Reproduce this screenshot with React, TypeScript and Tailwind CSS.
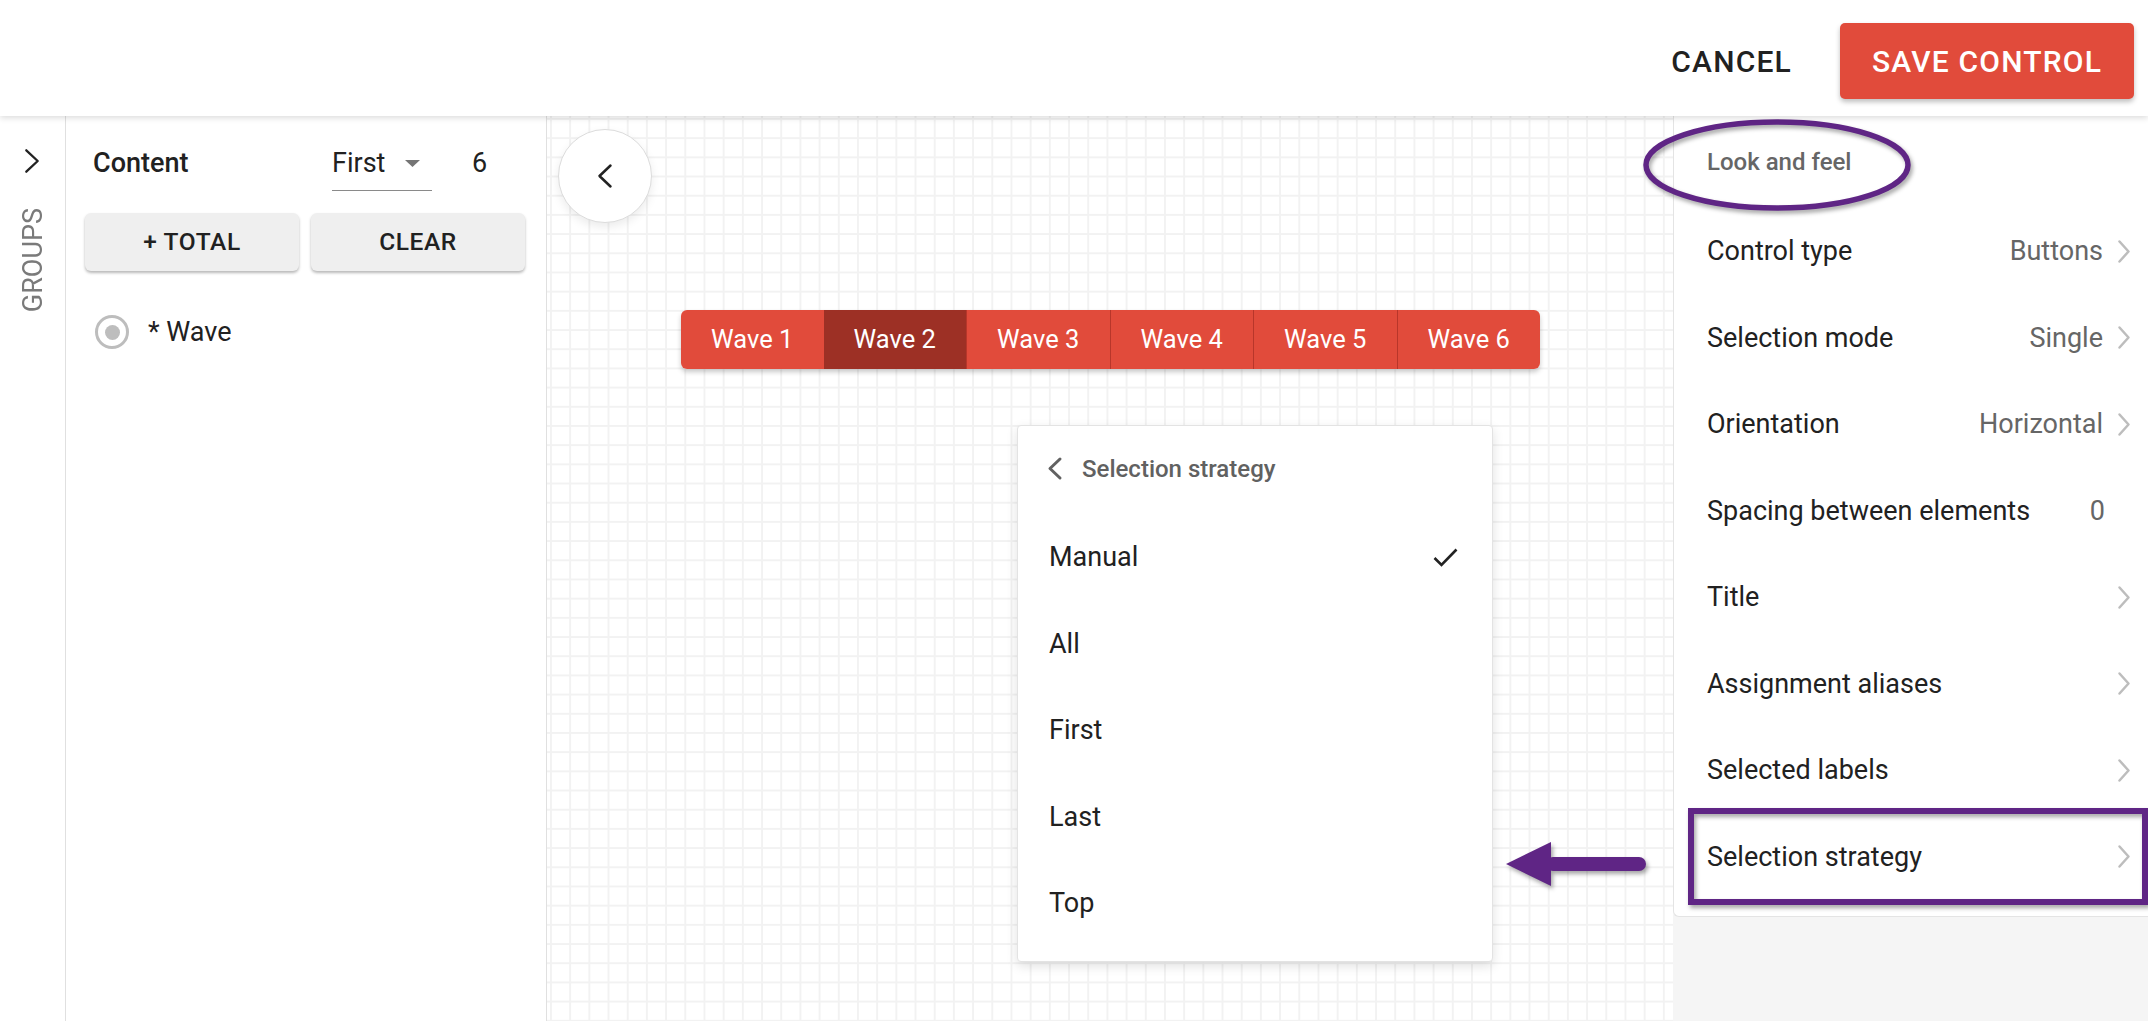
import React from "react";

const ChevronRight = ({ className = "", color = "#bdbdbd", w = 14, h = 25, sw = 2.5 }: { className?: string; color?: string; w?: number; h?: number; sw?: number }) => (
  <svg width={w} height={h} viewBox={`0 0 ${w} ${h}`} className={className} fill="none">
    <polyline points={`${sw},${sw} ${w - sw},${h / 2} ${sw},${h - sw}`} stroke={color} strokeWidth={sw} strokeLinecap="round" strokeLinejoin="round" />
  </svg>
);

const ChevronLeft = ({ className = "", color = "#222", w = 16, h = 25, sw = 2.5 }: { className?: string; color?: string; w?: number; h?: number; sw?: number }) => (
  <svg width={w} height={h} viewBox={`0 0 ${w} ${h}`} className={className} fill="none">
    <polyline points={`${w - sw},${sw} ${sw},${h / 2} ${w - sw},${h - sw}`} stroke={color} strokeWidth={sw} strokeLinecap="round" strokeLinejoin="round" />
  </svg>
);

const rows: { label: string; value?: string; chevron: boolean }[] = [
  { label: "Control type", value: "Buttons", chevron: true },
  { label: "Selection mode", value: "Single", chevron: true },
  { label: "Orientation", value: "Horizontal", chevron: true },
  { label: "Spacing between elements", value: "0", chevron: false },
  { label: "Title", chevron: true },
  { label: "Assignment aliases", chevron: true },
  { label: "Selected labels", chevron: true },
  { label: "Selection strategy", chevron: true },
];

const waves = ["Wave 1", "Wave 2", "Wave 3", "Wave 4", "Wave 5", "Wave 6"];
const options = ["Manual", "All", "First", "Last", "Top"];

export default function App() {
  return (
    <div className="relative w-[2148px] h-[1021px] overflow-hidden bg-white flex flex-col font-['Roboto',sans-serif] text-[#212121]">
      {/* Top bar */}
      <header className="relative z-10 h-[116px] shrink-0 bg-white flex items-center justify-end pt-[6px] pr-[14px] shadow-[0_2px_6px_rgba(0,0,0,0.14)]">
        <button className="px-[16px] h-[76px] text-[30px] font-medium tracking-[1.2px] text-[#212121]">CANCEL</button>
        <button className="ml-[32px] w-[294px] h-[76px] rounded-[5px] bg-[#e14b3b] text-white text-[30px] font-medium tracking-[1.2px] flex items-center justify-center shadow-[0_3px_5px_rgba(0,0,0,0.25)]">
          SAVE CONTROL
        </button>
      </header>

      <div className="flex flex-1 min-h-0">
        {/* Groups strip */}
        <aside className="w-[66px] shrink-0 border-r border-[#e0e0e0] bg-white flex flex-col items-center pt-[32px]">
          <ChevronRight color="#222" w={16} h={26} sw={2.3} className="ml-[-1px]" />
          <div className="mt-[34px] [writing-mode:vertical-rl] rotate-180 text-[27px] leading-[22px] text-[#7a7a7a] font-['Roboto',sans-serif]">
            GROUPS
          </div>
        </aside>

        {/* Content panel */}
        <section className="w-[481px] shrink-0 border-r border-[#e0e0e0] bg-white px-[19px] pt-[27px]">
          <div className="flex items-start h-[48px]">
            <div className="w-[247px] pl-[8px] text-[27px] font-medium leading-[40px]">Content</div>
            <div className="w-[100px] h-[48px] border-b border-[#8a8a8a] flex items-start">
              <span className="text-[27px] leading-[40px]">First</span>
              <svg width="15" height="7" viewBox="0 0 15 7" className="ml-[20px] mt-[17px]">
                <polygon points="0,0 15,0 7.5,7" fill="#757575" />
              </svg>
            </div>
            <div className="ml-[40px] text-[27px] leading-[40px]">6</div>
          </div>
          <div className="mt-[22px] flex gap-[12px]">
            <button className="w-[214px] h-[58px] rounded-[6px] bg-[#efefef] text-[24.5px] font-medium tracking-[0.6px] shadow-[0_2px_3px_rgba(0,0,0,0.28)]">+ TOTAL</button>
            <button className="w-[214px] h-[58px] rounded-[6px] bg-[#efefef] text-[24.5px] font-medium tracking-[0.6px] shadow-[0_2px_3px_rgba(0,0,0,0.28)]">CLEAR</button>
          </div>
          <div className="mt-[41px] ml-[10px] flex items-center">
            <div className="w-[34px] h-[34px] rounded-full border-[3px] border-[#bdbdbd] flex items-center justify-center">
              <div className="w-[15px] h-[15px] rounded-full bg-[#bdbdbd]" />
            </div>
            <span className="ml-[19px] text-[27px]">* Wave</span>
          </div>
        </section>

        {/* Canvas */}
        <main className="relative flex-1 min-w-0 bg-white bg-[linear-gradient(to_right,#f2f2f2_2px,transparent_2px),linear-gradient(to_bottom,#f2f2f2_2px,transparent_2px)] bg-[size:19.2px_19.2px] bg-[position:3px_2px]">
          <button className="absolute left-[11px] top-[13px] w-[94px] h-[94px] rounded-full bg-white border border-[#dcdcdc] flex items-center justify-center shadow-[0_4px_10px_rgba(0,0,0,0.08)]">
            <ChevronLeft w={16} h={26} sw={2.5} color="#222" />
          </button>

          <div className="absolute left-[134px] top-[194px] w-[859px] h-[59px] flex rounded-[6px] overflow-hidden shadow-[0_3px_5px_rgba(0,0,0,0.22)]">
            {waves.map((w, i) => (
              <div
                key={w}
                className={`flex-1 flex items-center justify-center text-[25.5px] text-white ${i === 1 ? "bg-[#9d3025]" : "bg-[#e14b3b]"} ${i > 1 ? "border-l border-[#b8362a]" : ""}`}
              >
                {w}
              </div>
            ))}
          </div>

          <div className="absolute left-[470px] top-[309px] w-[476px] h-[537px] bg-white rounded-[4px] border border-[#e3e3e3] shadow-[0_4px_12px_rgba(0,0,0,0.12)] flex flex-col">
            <div className="h-[88px] pb-[3px] flex items-center pl-[29px]">
              <ChevronLeft w={16} h={25} sw={3} color="#616161" />
              <span className="ml-[19px] text-[24px] font-medium text-[#616161]">Selection strategy</span>
            </div>
            {options.map((o, i) => (
              <div key={o} className="h-[86.5px] flex items-center justify-between pl-[31px] pr-[34px]">
                <span className="text-[27px]">{o}</span>
                {i === 0 && (
                  <svg width="25" height="19" viewBox="0 0 25 19" fill="none">
                    <polyline points="1.5,10 8.5,17 23.5,1.5" stroke="#222" strokeWidth="2.6" />
                  </svg>
                )}
              </div>
            ))}
          </div>
        </main>

        {/* Right panel */}
        <aside className="relative w-[475px] shrink-0 bg-[#f5f5f5]">
          <div className="h-[801px] bg-white border-l border-b border-[#e4e4e4] rounded-bl-[6px] pl-[33px] pr-[17px]">
            <div className="h-[92px] flex items-center text-[24px] font-medium text-[#666]">Look and feel</div>
            {rows.map((r) => (
              <div key={r.label} className="h-[86.5px] flex items-center">
                <span className="text-[27px] text-[#212121]">{r.label}</span>
                <span className="ml-auto flex items-center">
                  {r.value && (
                    <span className={`text-[27px] text-[#666] ${r.chevron ? "" : "mr-[26px]"}`}>{r.value}</span>
                  )}
                  {r.chevron && <ChevronRight className="ml-[14px]" />}
                </span>
              </div>
            ))}
          </div>
        </aside>
      </div>

      {/* Annotations */}
      <svg
        className="absolute left-0 top-0 pointer-events-none drop-shadow-[2px_3px_2px_rgba(0,0,0,0.35)]"
        width="2148"
        height="1021"
        viewBox="0 0 2148 1021"
        fill="none"
      >
        <ellipse cx="1777" cy="165" rx="131" ry="43" stroke="#5f2585" strokeWidth="5.5" />
        <rect x="1691" y="811" width="454" height="91" stroke="#5f2585" strokeWidth="6" />
        <line x1="1553" y1="864" x2="1639" y2="864" stroke="#5f2585" strokeWidth="14" strokeLinecap="round" />
        <polygon points="1506,864 1551,842 1551,886" fill="#5f2585" />
      </svg>
    </div>
  );
}
